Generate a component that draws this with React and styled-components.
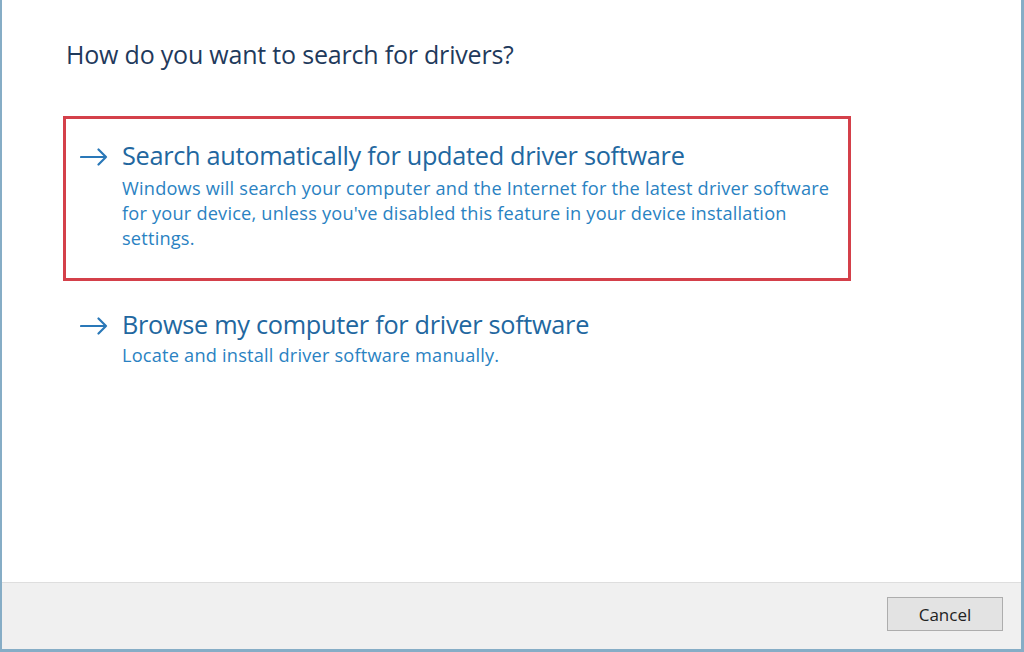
import React from "react";
import styled, { createGlobalStyle } from "styled-components";

const GlobalStyle = createGlobalStyle`
  html, body {
    margin: 0;
    padding: 0;
    background: #ffffff;
  }
  body {
    font-family: "Open Sans", "Noto Sans", sans-serif;
  }
`;

// Styled Components
const Window = styled.div`
  width: 1024px;
  height: 652px;
  box-sizing: border-box;
  display: flex;
  flex-direction: column;
  background: #ffffff;
  border-left: 2px solid #86adc6;
  border-right: 3px solid #86adc6;
  border-bottom: 3px solid #86adc6;
`;

const Content = styled.div`
  flex: 1;
  padding: 37px 0 0 64px;
`;

const Heading = styled.h1`
  margin: 0 0 45px;
  font-size: 25px;
  line-height: 34px;
  font-weight: 400;
  color: #1f3a5c;
  letter-spacing: -0.2px;
`;

const Option = styled.div`
  box-sizing: border-box;
  width: 788px;
  margin-left: -3px;
  padding: ${(p) => (p.$highlighted ? "20px 14px 27px 14px" : "0 14px")};
  border: 3px solid ${(p) => (p.$highlighted ? "#d4404a" : "transparent")};
  display: flex;
  gap: 14px;
  margin-bottom: 24px;
`;

const Arrow = styled.svg`
  flex: none;
  width: 28px;
  height: 18px;
  margin-top: 9px;
`;

const OptionText = styled.div`
  display: flex;
  flex-direction: column;
`;

const OptionTitle = styled.div`
  font-size: 25.3px;
  line-height: 33px;
  color: #22679f;
  letter-spacing: -0.3px;
`;

const OptionDesc = styled.div`
  margin-top: ${(p) => (p.$tight ? "2px" : "4px")};
  font-size: 18.2px;
  line-height: 25px;
  color: #2a82c2;
  letter-spacing: 0.2px;
  max-width: 716px;
`;

const Footer = styled.div`
  height: 67px;
  flex: none;
  box-sizing: border-box;
  background: #f0f0f0;
  border-top: 1px solid #dedede;
  display: flex;
  align-items: center;
  justify-content: flex-end;
  padding: 0 18px 4px 0;
`;

const Button = styled.button`
  width: 116px;
  height: 34px;
  box-sizing: border-box;
  background: #e3e3e3;
  border: 1px solid #adadad;
  font-family: "Open Sans", "Noto Sans", sans-serif;
  font-size: 17px;
  color: #222;
  padding: 0;
`;

const ArrowIcon = () => (
  <Arrow viewBox="0 0 28 18">
    <path
      d="M1 9 H26 M18.5 1.5 L26 9 L18.5 16.5"
      fill="none"
      stroke="#2a78b8"
      strokeWidth="2.2"
      strokeLinecap="round"
      strokeLinejoin="round"
    />
  </Arrow>
);

const options = [
  {
    title: "Search automatically for updated driver software",
    desc: "Windows will search your computer and the Internet for the latest driver software for your device, unless you've disabled this feature in your device installation settings.",
    highlighted: true,
  },
  {
    title: "Browse my computer for driver software",
    desc: "Locate and install driver software manually.",
  },
];

const App = () => (
  <>
    <GlobalStyle />
    <Window>
      <Content>
        <Heading>How do you want to search for drivers?</Heading>
        {options.map((o) => (
          <Option key={o.title} $highlighted={o.highlighted}>
            <ArrowIcon />
            <OptionText>
              <OptionTitle>{o.title}</OptionTitle>
              <OptionDesc $tight={!o.highlighted}>{o.desc}</OptionDesc>
            </OptionText>
          </Option>
        ))}
      </Content>
      <Footer>
        <Button>Cancel</Button>
      </Footer>
    </Window>
  </>
);

export default App;
